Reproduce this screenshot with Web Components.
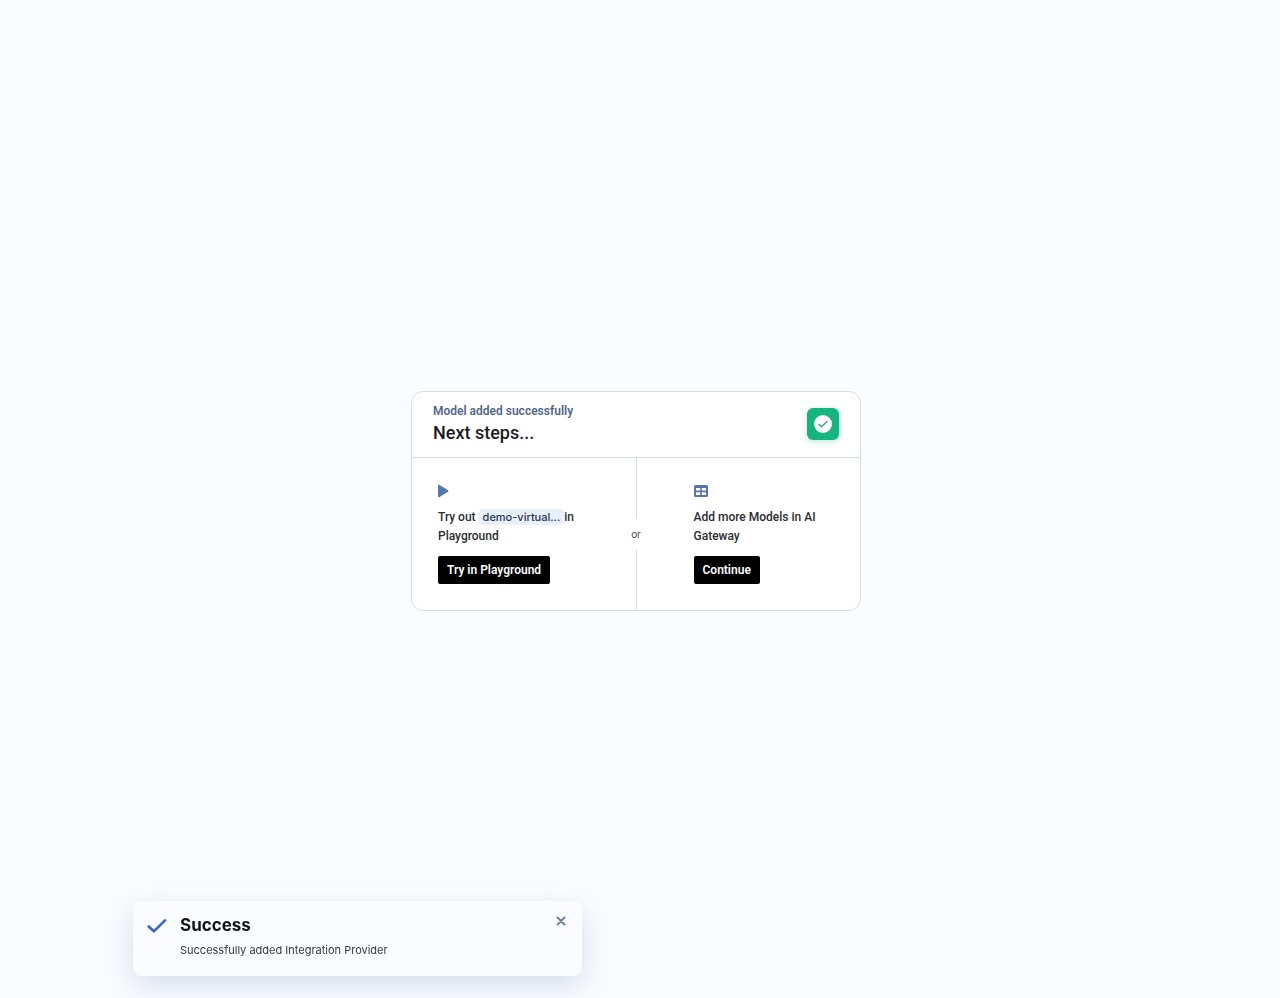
<!DOCTYPE html>
<html lang="en">
<head>
<meta charset="utf-8">
<meta name="viewport" content="width=device-width, initial-scale=1">
<title>Next steps</title>
<style>
  body { margin: 0; background: #fafcff; color: #1f2328; font-family: Roboto, "Liberation Sans", sans-serif; }
</style>
</head>
<body>
<setup-page>
  <steps-card>
    <span slot="eyebrow">Model added successfully</span>
    <span slot="title">Next steps...</span>
    <step-option slot="first" action="Try in Playground" icon="play">Try out <model-chip>demo-virtual...</model-chip>in<br>Playground</step-option>
    <step-option slot="second" action="Continue" icon="table">Add more Models in AI Gateway</step-option>
  </steps-card>
  <toast-message slot="toast">
    <span slot="title">Success</span>
    Successfully added Integration Provider
  </toast-message>
</setup-page>
<script>
const define = (name, html, setup) => {
  const template = document.createElement('template');
  template.innerHTML = html;
  customElements.define(name, class extends HTMLElement {
    constructor() {
      super();
      this.attachShadow({ mode: 'open' }).append(template.content.cloneNode(true));
    }
    connectedCallback() { if (setup) setup(this, this.shadowRoot); }
  });
};

define('setup-page', `
  <style>
    :host { display: block; }
    main { min-height: 100vh; box-sizing: border-box; padding: 4px 8px 0 0; display: flex; align-items: center; justify-content: center; }
    .toast { position: fixed; left: 133px; bottom: 22px; }
  </style>
  <main><slot></slot></main>
  <div class="toast"><slot name="toast"></slot></div>`);

define('steps-card', `
  <style>
    :host { display: block; box-sizing: border-box; width: 450px; max-width: 100%; background: #fff; border: 1px solid #d3dfea; border-radius: 12px; }
    header { display: flex; align-items: center; justify-content: space-between; padding: 10px 21px 12px; border-bottom: 1px solid #d3dfea; }
    p, h1 { margin: 0; }
    p { font-size: 12px; line-height: 18px; font-weight: 600; color: #53658a; }
    h1 { font-size: 18px; line-height: 25px; font-weight: 500; color: #1c1c1e; }
    .badge { width: 32px; height: 32px; border-radius: 6px; background: #14b57f; box-shadow: 0 2px 6px #14b57f40; display: grid; place-items: center; }
    .body { display: grid; grid-template-columns: 1fr 1px 1fr; }
    .rule { display: flex; flex-direction: column; align-items: center; font-family: Inter, sans-serif; font-size: 10px; line-height: 30px; color: #4a4a4d; }
    .rule i { flex: 1; width: 1px; background: #d3dfea; }
    .second { padding-left: 31px; }
  </style>
  <header>
    <div><p><slot name="eyebrow"></slot></p><h1><slot name="title"></slot></h1></div>
    <div class="badge"><svg width="18" height="18" viewBox="0 0 18 18" fill="none" aria-hidden="true"><circle cx="9" cy="9" r="9" fill="#fff"/><path d="M4.5 9l3 2.8 6-5.8" stroke="#3f9f7b" stroke-width="1.3"/></svg></div>
  </header>
  <div class="body">
    <slot name="first"></slot>
    <div class="rule"><i></i><span>or</span><i></i></div>
    <div class="second"><slot name="second"></slot></div>
  </div>`);

define('model-chip', `
  <style>
    :host { display: inline-block; background: #e8f0fd; color: #26364f; border-radius: 4px; padding: 0 4px; font-family: Inter, sans-serif; font-size: 11px; line-height: 16px; }
  </style>
  <slot></slot>`);

const icons = {
  play: '<svg width="12" height="14" viewBox="0 0 12 14" aria-hidden="true"><path d="M0 1.8C0 .9.8.5 1.6 1l8.2 5.1c.8.5.8 1.3 0 1.8l-8.2 5.1C.8 13.5 0 13.1 0 12.2z" fill="#5877ac"/></svg>',
  table: '<svg width="14" height="14" viewBox="0 0 14 14" aria-hidden="true"><path fill-rule="evenodd" fill="#5a74a8" d="M1.5 1h11A1.5 1.5 0 0 1 14 2.5v9a1.5 1.5 0 0 1-1.5 1.5h-11A1.5 1.5 0 0 1 0 11.5v-9A1.5 1.5 0 0 1 1.5 1zM2 4v2.6h4.2V4zM7.8 4v2.6H12V4zM2 8.2V11h4.2V8.2zM7.8 8.2V11H12V8.2z"/></svg>'
};

define('step-option', `
  <style>
    :host { display: block; padding: 26px; }
    .icon { display: block; height: 14px; }
    .icon svg { display: block; }
    p { margin: 10px 0; max-width: 150px; font-size: 12px; line-height: 19px; font-weight: 500; color: #2c2c30; }
    button { display: block; height: 28px; padding: 0 9px; border: 0; border-radius: 2px; background: #000; color: #fff; font: 600 12px/18px Roboto, "Liberation Sans", sans-serif; }
  </style>
  <span class="icon"></span>
  <p><slot></slot></p>
  <button type="button"></button>`,
  (host, root) => {
    root.querySelector('.icon').innerHTML = icons[host.getAttribute('icon')];
    root.querySelector('button').textContent = host.getAttribute('action');
  });

define('toast-message', `
  <style>
    :host { display: grid; grid-template-columns: 20px 1fr 12px; column-gap: 13px; box-sizing: border-box; width: 449px; max-width: 100%; min-height: 75px; padding: 12px 15px 12px 14px; border-radius: 8px; background: #fbfcff; box-shadow: 0 10px 30px #5574aa38; font-family: Inter, "Liberation Sans", sans-serif; }
    h2, p { margin: 0; }
    h2 { font-size: 17px; line-height: 24px; font-weight: 700; color: #111216; }
    p { margin-top: 3px; font-size: 11px; line-height: 20px; color: #37383d; }
    .check { margin-top: 5px; }
    button { width: 12px; height: 12px; margin-top: 2px; padding: 0; border: 0; background: none; display: grid; place-items: center; }
  </style>
  <svg class="check" width="20" height="16" viewBox="0 0 20 16" fill="none" aria-hidden="true"><path d="M1.7 8.5l5.2 4.8L18 2.3" stroke="#3568c8" stroke-width="2.6" stroke-linecap="round" stroke-linejoin="round"/></svg>
  <div role="status"><h2><slot name="title"></slot></h2><p><slot></slot></p></div>
  <button type="button" aria-label="Close"><svg width="10" height="10" viewBox="0 0 10 10"><path d="M1.5 1.5l7 7m0-7l-7 7" stroke="#71809a" stroke-width="2" stroke-linecap="round"/></svg></button>`);
</script>
</body>
</html>
